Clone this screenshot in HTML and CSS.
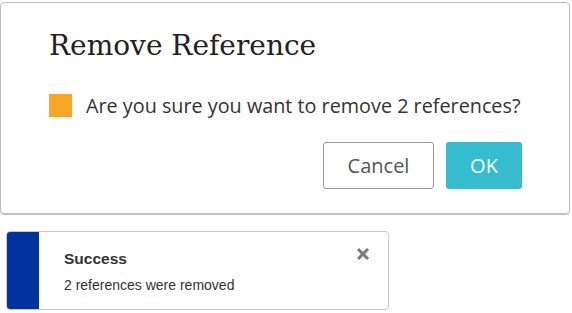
FILE: index.html
```html
<!DOCTYPE html>
<html lang="en">
<head>
  <meta charset="UTF-8">
  <title>Remove Reference</title>
  <link rel="stylesheet" href="styles.css">
</head>
<body>

<div class="dialog">
  <h2>Remove Reference</h2>
  <div class="message">
    <span class="warn-box"></span>
    <span>Are you sure you want to remove 2 references?</span>
  </div>
  <div class="actions">
    <button class="btn-cancel">Cancel</button>
    <button class="btn-ok">OK</button>
  </div>
</div>

<div class="toast">
  <div class="toast-bar"></div>
  <div class="toast-body">
    <div class="toast-title">Success</div>
    <div class="toast-text">2 references were removed</div>
  </div>
  <svg class="toast-close" width="14" height="14" viewBox="0 0 14 14">
    <path d="M2 2 L12 12 M12 2 L2 12" stroke="#7a7a7a" stroke-width="3"/>
  </svg>
</div>

</body>
</html>
```

FILE: styles.css
```css
body {
  margin: 0;
  padding-top: 2px;
  background: #fff;
  font-family: "Open Sans", sans-serif;
}
.dialog {
  box-sizing: border-box;
  width: 570px;
  height: 212px;
  border: 1px solid #bdbdbd;
  border-radius: 4px;
  box-shadow: 0 1px 1px rgba(0, 0, 0, 0.25);
  padding: 0 47px 0 48px;
}
.dialog h2 {
  margin: 0;
  padding-top: 25px;
  font-family: "DejaVu Serif", serif;
  font-weight: normal;
  font-size: 28px;
  line-height: 36px;
  color: #222;
}
.message {
  display: flex;
  align-items: center;
  margin-top: 28px;
  font-size: 19.8px;
  white-space: nowrap;
  color: #333;
}
.warn-box {
  flex: none;
  width: 23px;
  height: 23px;
  background: #f8a623;
  margin-right: 14px;
}
.actions {
  display: flex;
  justify-content: flex-end;
  gap: 12px;
  margin-top: 23px;
}
.actions button {
  height: 47px;
  font-family: "Open Sans", sans-serif;
  font-size: 20px;
  border-radius: 3px;
  cursor: pointer;
}
.btn-cancel {
  width: 111px;
  background: #fff;
  border: 1px solid #999;
  color: #555;
}
.btn-ok {
  width: 76px;
  background: #35bccf;
  border: none;
  color: #fff;
}
.toast {
  position: relative;
  display: flex;
  box-sizing: border-box;
  width: 383px;
  height: 79px;
  margin: 17px 0 0 6px;
  border: 1px solid #c8c8c8;
  border-radius: 4px;
  overflow: hidden;
  font-family: "Liberation Sans", Arial, sans-serif;
}
.toast-bar {
  width: 32px;
  background: #0033a0;
}
.toast-body {
  padding: 18px 0 0 25px;
  color: #333;
}
.toast-title {
  font-weight: bold;
  font-size: 15.5px;
}
.toast-text {
  margin-top: 9px;
  font-size: 14px;
}
.toast-close {
  position: absolute;
  top: 15px;
  right: 18px;
}
```
